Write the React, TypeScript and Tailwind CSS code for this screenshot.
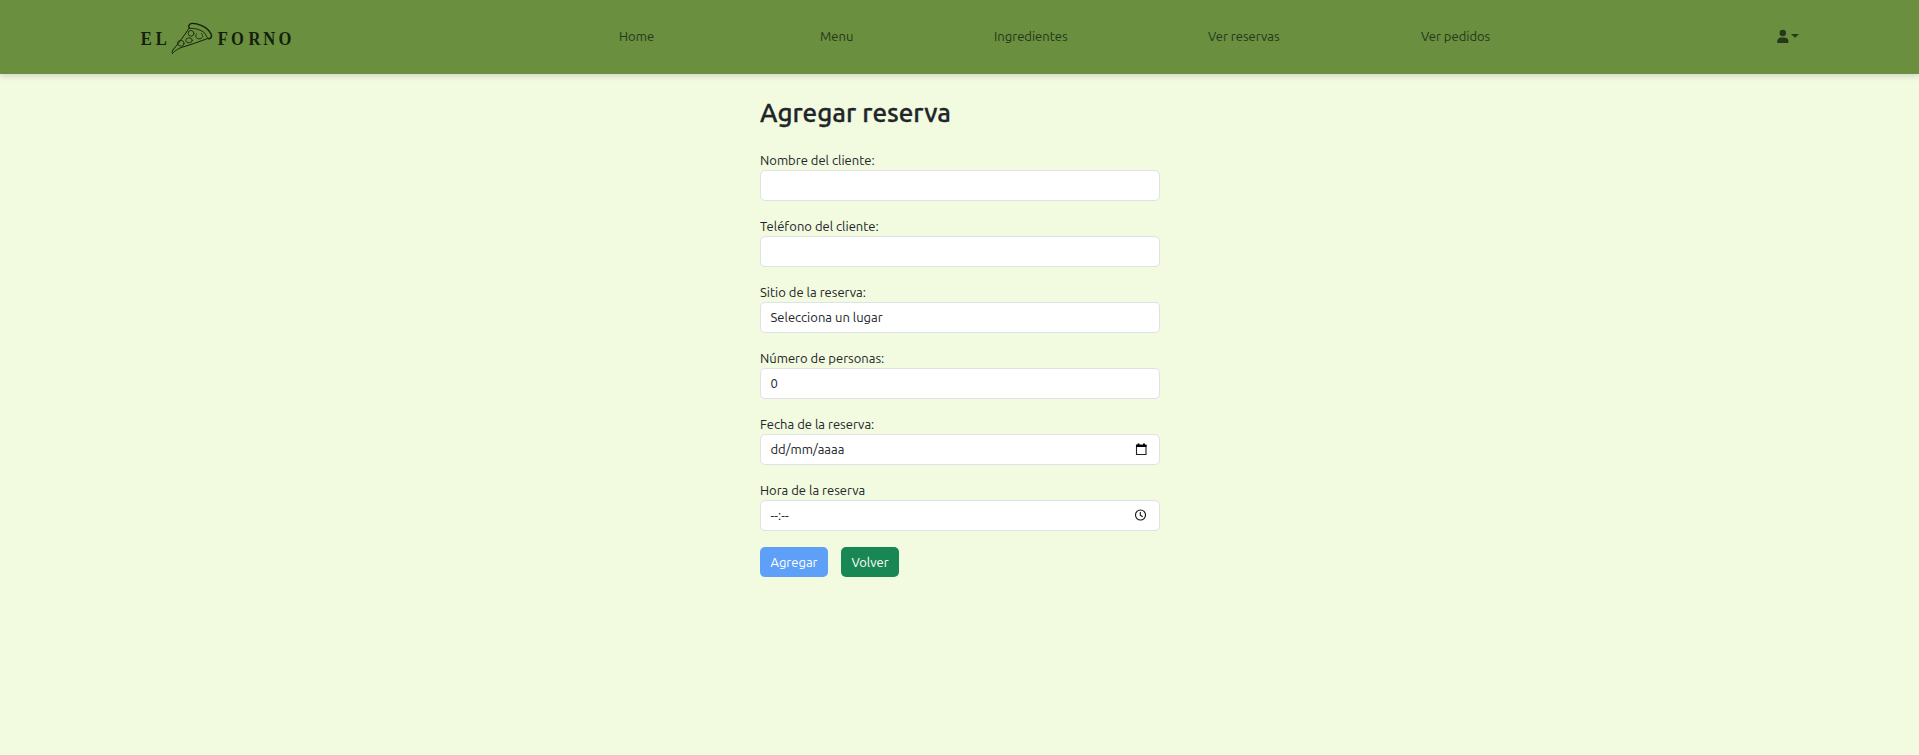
import type { ReactNode } from 'react';

const NAV = [
  { label: 'Home', cls: 'w-[201px]' },
  { label: 'Menu', cls: 'w-[174px]' },
  { label: 'Ingredientes', cls: 'w-[214px]' },
  { label: 'Ver reservas', cls: 'w-[213px]' },
  { label: 'Ver pedidos', cls: 'w-[356px]' },
];

function Logo() {
  return (
    <svg width="152" height="34" viewBox="140 21 152 34" className="block" fill="none" stroke="#15200c" strokeLinecap="round" strokeLinejoin="round">
      <g transform="scale(0.93 1)" fill="#15200c" stroke="none" fontFamily="'Liberation Serif', serif" fontWeight="700" fontSize="17.8">
        <text x="151.4 167.5" y="45.2">EL</text>
        <text x="234.2 248.4 267.1 283.1 299.6" y="45.2">FORNO</text>
      </g>
      <path strokeWidth="1.4" d="M189.300 28.300C188 26.500 188.800 24 192 23.400C198 23.300 205 26.500 208 29.700C210 32 211.500 34 211.600 35.800C211.300 37.500 210.500 38.500 208.800 38.700" />
      <path strokeWidth="0.9" d="M189.300 28.300C195 28 201 29.800 204.300 32.600C206 34.500 206 37.500 208.800 38.700" />
      <path strokeWidth="1" d="M188.700 28.800C184 36 178 44 172.800 50C172.300 51.500 172 53 172.400 53.600C174 51.500 176 50 181 47.600C190 44.800 199 42 207.500 38.600" />
      <g strokeWidth="0.8">
        <circle cx="191" cy="33.300" r="2.900" />
        <ellipse cx="189" cy="40.300" rx="3.300" ry="2.500" />
        <ellipse cx="180.800" cy="43.300" rx="3.300" ry="2.900" />
        <path d="M196.300 33.800C194.500 37 197 39.300 200 38.800C203.300 38 203.500 35 201.300 33.300" />
      </g>
    </svg>
  );
}

function Field({ label, children }: { label: string; children?: ReactNode }) {
  return (
    <div className="mb-[15px]">
      <div className="h-5 leading-5"><span>{label}</span></div>
      <div className="flex h-[31px] items-center justify-between rounded-[5px] border border-[#dee2e6] bg-white pr-[10px] pl-[9.5px]">{children}</div>
    </div>
  );
}

export default function App() {
  return (
    <div className="min-h-[755px] bg-[#f2fae0] font-['Ubuntu','Noto_Sans',sans-serif] text-[13px] whitespace-nowrap text-[#212529]">
      <header className="flex h-[74px] items-start bg-[#6a8f3f] pl-[140px] text-[#25381a] shadow-[0_2px_6px_rgba(0,0,0,0.15)]">
        <div className="mt-[21px] w-[152px]"><Logo /></div>
        <nav className="mt-[26px] ml-[327px] flex leading-5">
          {NAV.map((n) => <a key={n.label} className={n.cls}><span>{n.label}</span></a>)}
        </nav>
        <div className="mt-[29px] flex gap-[2px]">
          <svg width="12" height="14" viewBox="0 0 12 14" fill="currentColor"><circle cx="5.8" cy="4" r="3.2" /><path d="M.3 14v-1.800C.3 9.500 2.500 8.500 4.500 8.500h2.700c2 0 4.200 1 4.200 3.700V14Z" /></svg>
          <svg width="8" height="14" viewBox="0 0 8 14" fill="currentColor"><path d="M0 5h8L4 8.700Z" /></svg>
        </div>
      </header>
      <main className="ml-[760px] w-[400px] pt-[23px]">
        <h1 className="mb-[21px] h-8 text-[26px] leading-8 font-medium [-webkit-text-stroke:0.3px_#212529]"><span>Agregar reserva</span></h1>
        <Field label="Nombre del cliente:" />
        <Field label="Teléfono del cliente:" />
        <Field label="Sitio de la reserva:"><span>Selecciona un lugar</span></Field>
        <Field label="Número de personas:"><span>0</span></Field>
        <Field label="Fecha de la reserva:">
          <span>dd/mm/aaaa</span>
          <svg width="13" height="13" viewBox="0 0 13 13" className="mr-px" fill="none" stroke="#222"><path d="M1.500 2h9.500v9.500H1.500Z" strokeWidth="1.100" /><path d="M1 3h10.500M3.500 0.500v2M9 0.500v2" stroke="#000" strokeWidth="1.900" /></svg>
        </Field>
        <Field label="Hora de la reserva">
          <span>--:--</span>
          <svg width="13" height="13" viewBox="0 0 13 13" className="mr-[2px]" fill="none" stroke="#111" strokeWidth="1.100"><circle cx="6.500" cy="6" r="5" /><path d="M6.300 3v3.300l2.400 1.500" /></svg>
        </Field>
        <div className="flex gap-[13px] pt-px leading-[30px] text-white">
          <button className="h-[30px] w-[68px] rounded-[5px] bg-[#5e9ff7]">Agregar</button>
          <button className="h-[30px] w-[58px] rounded-[5px] bg-[#198754]">Volver</button>
        </div>
      </main>
    </div>
  );
}
